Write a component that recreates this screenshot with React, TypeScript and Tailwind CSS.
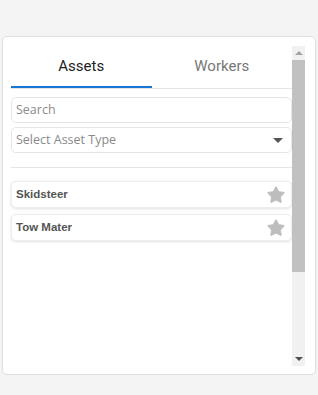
import { Star } from 'lucide-react';

const assets = ['Skidsteer', 'Tow Mater'];

function Scrollbar () {
  return (
    <div className="w-[13px] flex flex-col bg-[#f1f1f1]">
      <div className="h-[14px] flex items-center justify-center">
        <div className="w-0 h-0 border-x-[4px] border-x-transparent border-b-[4px] border-b-[#a3a3a3]" />
      </div>
      <div className="h-[212px] bg-[#c1c1c1]" />
      <div className="flex-1" />
      <div className="h-[14px] flex items-center justify-center">
        <div className="w-0 h-0 border-x-[4px] border-x-transparent border-t-[4px] border-t-[#505050]" />
      </div>
    </div>
  );
}

export default function App () {
  return (
    <div className="w-[318px] h-[395px] bg-[#f4f4f4] pt-[36px] px-[2px]">
      <div className="w-[314px] h-[339px] bg-white border border-[#dedede] rounded-[5px] pt-[9px] pb-[8px] pl-[8px] pr-[10px] flex">
        <div className="w-[281px] flex flex-col">
          {/* Tabs */}
          <div className="flex">
            <div className="flex-1 flex flex-col">
              <div className="h-[40px] flex items-center justify-center text-[15px] text-[#222] font-['Roboto',sans-serif]">
                Assets
              </div>
              <div className="h-[2px] bg-[#1976d2]" />
            </div>
            <div className="flex-1 flex flex-col">
              <div className="h-[40px] flex items-center justify-center text-[15px] text-[#777] font-['Roboto',sans-serif]">
                Workers
              </div>
              <div className="h-[2px]" />
            </div>
          </div>
          <div className="h-px bg-[#e6e6e6]" />

          {/* Filters */}
          <div className="mt-[8px] h-[26px] border border-[#e6e6e6] rounded-[5px] px-[4px] flex items-center text-[12.5px] text-[#8a8a8a] font-['Open_Sans',sans-serif]">
            Search
          </div>
          <div className="mt-[4px] h-[26px] border border-[#e6e6e6] rounded-[5px] pl-[4px] pr-[8px] flex items-center justify-between text-[12.5px] text-[#8a8a8a] font-['Open_Sans',sans-serif]">
            <span>Select Asset Type</span>
            <div className="w-0 h-0 border-x-[5px] border-x-transparent border-t-[5px] border-t-[#555]" />
          </div>

          <div className="mt-[14px] h-px bg-[#e6e6e6]" />

          {/* Asset list */}
          <div className="mt-[13px] flex flex-col gap-[6px]">
            {assets.map((name) => (
              <div
                key={name}
                className="h-[27px] bg-white rounded-[5px] border border-[#eeeeee] shadow-[0_1px_3px_rgba(0,0,0,0.12)] pl-[4px] pr-[5px] flex items-center justify-between"
              >
                <span className="text-[11.5px] font-bold text-[#555] font-['Liberation_Sans',Arial,sans-serif]">
                  {name}
                </span>
                <Star className="w-[20px] h-[20px] text-[#bdbdbd]" fill="#bdbdbd" strokeWidth={1} />
              </div>
            ))}
          </div>
        </div>
        <Scrollbar />
      </div>
    </div>
  );
}
